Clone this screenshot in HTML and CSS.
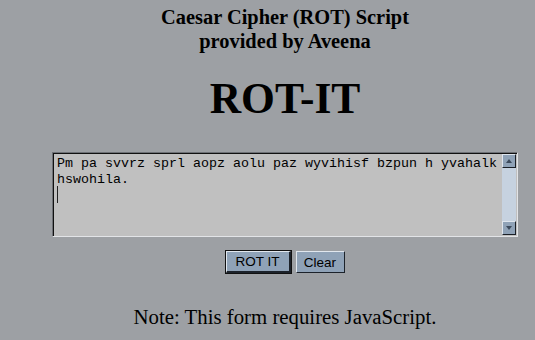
FILE: index.html
```html
<!DOCTYPE html>
<html>
<head>
<meta charset="utf-8">
<title>ROT-IT</title>
<link rel="stylesheet" href="styles.css">
</head>
<body>
<div class="page">
  <div class="title">Caesar Cipher (ROT) Script<br>provided by Aveena</div>
  <h1 class="heading">ROT-IT</h1>
  <form class="form">
    <div class="field">
      <div class="text-wrap">
        <textarea class="text" spellcheck="false">Pm pa svvrz sprl aopz aolu paz wyvihisf bzpun h yvahalk hswohila.
</textarea>
        <span class="caret"></span>
      </div>
      <div class="scrollbar">
        <div class="arrow"><svg width="8" height="6" viewBox="0 0 8 6"><path d="M1 5 L4 1 L7 5 Z" fill="#3c4a5c"/></svg></div>
        <div class="track"></div>
        <div class="arrow"><svg width="8" height="6" viewBox="0 0 8 6"><path d="M1 1 L4 5 L7 1 Z" fill="#3c4a5c"/></svg></div>
      </div>
    </div>
    <div class="buttons">
      <button type="button" class="btn btn-default">ROT IT</button>
      <button type="button" class="btn">Clear</button>
    </div>
  </form>
  <p class="note">Note: This form requires JavaScript.</p>
</div>
</body>
</html>
```
FILE: styles.css
```css
html, body {
  margin: 0;
  padding: 0;
  background: #9da0a4;
}
body {
  font-family: "Liberation Serif", "Times New Roman", serif;
  color: #000;
}
.page {
  display: flex;
  flex-direction: column;
  align-items: center;
  padding-top: 5px;
  padding-left: 35px;
}
.title {
  font-size: 20.4px;
  font-weight: bold;
  line-height: 24px;
  text-align: center;
}
.heading {
  margin: 20px 0 0;
  font-size: 43.5px;
  line-height: 50px;
  font-weight: bold;
}
.form {
  margin-top: 29px;
  display: flex;
  flex-direction: column;
  align-items: center;
}
.field {
  display: flex;
  width: 466px;
  height: 85px;
  box-sizing: border-box;
  border-style: solid;
  border-width: 1px;
  border-color: #6e7176 #e2e4e7 #e2e4e7 #6e7176;
  box-shadow: inset 1px 1px 0 #111;
  background: #c0c0c0;
}
.text-wrap {
  flex: 1;
  position: relative;
  display: flex;
}
.text {
  flex: 1;
  margin: 1px 0 0 1px;
  border: 0;
  padding: 2px 0 0 3px;
  background: transparent;
  font-family: "Liberation Mono", "Courier New", monospace;
  font-size: 13.33px;
  line-height: 16px;
  color: #000;
  resize: none;
  overflow: hidden;
  outline: none;
}
.caret {
  position: absolute;
  left: 4px;
  top: 33px;
  width: 1px;
  height: 17px;
  background: #222;
}
.scrollbar {
  width: 14px;
  display: flex;
  flex-direction: column;
  margin: 1px 1px 1px 0;
  background: #c6d2e0;
}
.track {
  flex: 1;
}
.arrow {
  width: 14px;
  height: 14px;
  box-sizing: border-box;
  background: #8fa2b7;
  border-style: solid;
  border-width: 1px;
  border-color: #dfe6ee #1a1f26 #1a1f26 #dfe6ee;
  display: flex;
  align-items: center;
  justify-content: center;
}
.buttons {
  margin-top: 14px;
  display: flex;
  gap: 5px;
}
.btn {
  height: 22px;
  box-sizing: border-box;
  margin: 0;
  padding: 0 6px;
  font-family: "Liberation Sans", Arial, sans-serif;
  font-size: 13.5px;
  color: #000;
  background: #8fa2b7;
  border-style: solid;
  border-width: 1px;
  border-color: #e1e7ee #1c222a #1c222a #e1e7ee;
}
.btn-default {
  width: 65px;
  outline: 1px solid #111;
  outline-offset: 0;
  border-width: 1px 2px 2px 1px;
}
.btn + .btn {
  width: 49px;
}
.note {
  margin: 32px 0 0;
  font-size: 20.8px;
  line-height: 24px;
}
```
